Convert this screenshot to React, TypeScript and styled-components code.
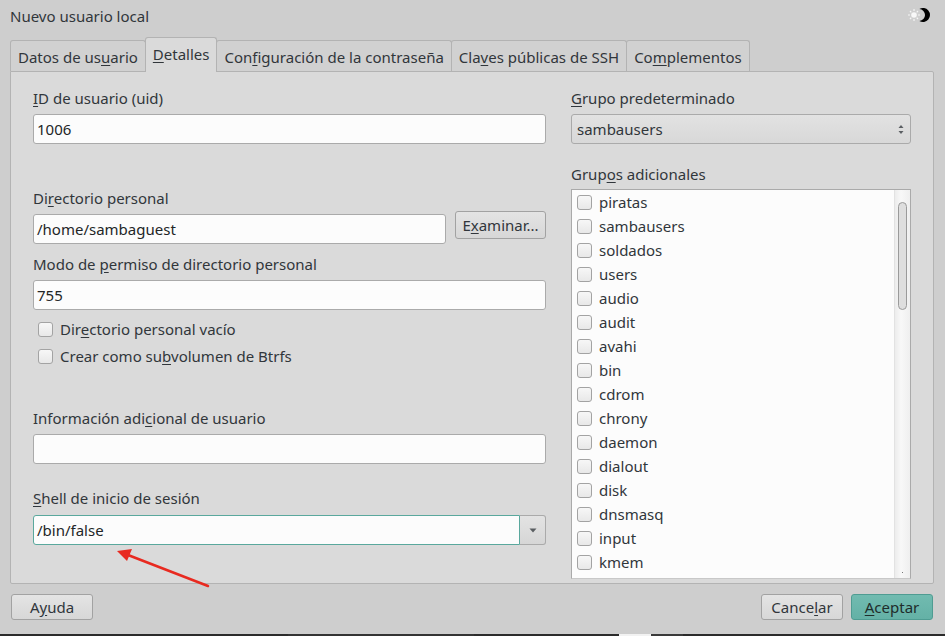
import React from "react";
import styled, { createGlobalStyle } from "styled-components";

const Global = createGlobalStyle`
  html, body { margin: 0; padding: 0; }
  body { background: #cecece; font-family: "Noto Sans", "Open Sans", sans-serif; font-size: 15px; color: #31363b; }
  * { box-sizing: border-box; }
`;

const Window = styled.div`
  position: relative;
  width: 945px;
  height: 636px;
  background: #cecece;
  display: flex;
  flex-direction: column;
  overflow: hidden;
`;

const TitleBar = styled.div`
  height: 37px;
  display: flex;
  align-items: flex-start;
  justify-content: space-between;
  padding: 6px 15px 0 10px;
  color: #31363b;
  line-height: 20px;
`;

const TitleIcon = styled.svg`
  margin-top: 1px;
`;

const TabBar = styled.div`
  display: flex;
  align-items: flex-end;
  height: 34px;
  padding-left: 10px;
`;

const Tab = styled.div<{ $active?: boolean }>`
  position: relative;
  height: ${(p) => (p.$active ? 35 : 31)}px;
  margin-bottom: ${(p) => (p.$active ? -1 : 0)}px;
  margin-right: -1px;
  z-index: ${(p) => (p.$active ? 2 : 1)};
  padding: 0 7px;
  display: flex;
  align-items: center;
  padding-top: ${(p) => (p.$active ? 0 : 1)}px;
  padding-bottom: ${(p) => (p.$active ? 2 : 0)}px;
  border: 1px solid #b3b3b3;
  border-bottom: none;
  border-radius: 3px 3px 0 0;
  background: ${(p) => (p.$active ? "#dadada" : "#d1d1d1")};
  color: #31363b;
  white-space: nowrap;
`;

const Mn = styled.span`
  text-decoration: underline;
  text-underline-offset: 2px;
`;

const Panel = styled.div`
  margin: 0 11px 0 10px;
  height: 513px;
  background: #dadada;
  border: 1px solid #b3b3b3;
  border-radius: 0 2px 2px 2px;
  display: grid;
  grid-template-columns: 513px 340px;
  column-gap: 25px;
  padding: 17px 21px 0 22px;
`;

const Column = styled.div`
  display: flex;
  flex-direction: column;
`;

const Label = styled.div<{ $top?: number }>`
  height: 20px;
  line-height: 18px;
  margin-top: ${(p) => p.$top ?? 0}px;
  color: #31363b;
  white-space: nowrap;
`;

const TextInput = styled.div<{ $top?: number; $grow?: boolean }>`
  height: 30px;
  flex: ${(p) => (p.$grow ? "1 1 auto" : "none")};
  margin-top: ${(p) => p.$top ?? 5}px;
  border: 1px solid #aaaaaa;
  border-radius: 3px;
  background: #fcfcfc;
  padding: 0 3px;
  display: flex;
  align-items: center;
  color: #232627;
`;

const Row = styled.div`
  display: flex;
  align-items: flex-start;
  margin-top: 5px;
`;

const Button = styled.div<{ $primary?: boolean; $w?: number; $h?: number }>`
  width: ${(p) => p.$w ?? 82}px;
  height: ${(p) => p.$h ?? 26}px;
  border: 1px solid ${(p) => (p.$primary ? "#4f9c92" : "#a2a2a2")};
  border-radius: 3px;
  background: ${(p) =>
    p.$primary
      ? "linear-gradient(#71bbb0, #64b1a6)"
      : "linear-gradient(#e4e4e4, #d7d7d7)"};
  display: flex;
  align-items: center;
  justify-content: center;
  color: ${(p) => (p.$primary ? "#1f2d2b" : "#31363b")};
  white-space: nowrap;
`;

const BrowseButton = styled(Button)`
  margin-left: 9px;
  margin-top: -3px;
`;

const CheckRow = styled.div<{ $top?: number }>`
  display: flex;
  align-items: center;
  height: 20px;
  margin-top: ${(p) => p.$top ?? 0}px;
  padding-left: 5px;
  gap: 7px;
  color: #31363b;
`;

const Box = styled.div`
  width: 15px;
  height: 15px;
  border: 1px solid #a3a3a3;
  border-radius: 3px;
  background: linear-gradient(#f7f7f7, #e8e8e8);
  flex: none;
`;

const EditCombo = styled.div`
  display: flex;
  height: 30px;
  margin-top: 6px;
`;

const EditField = styled.div`
  flex: 1;
  border: 1px solid #5aa89d;
  border-radius: 3px 0 0 3px;
  background: #fcfcfc;
  padding: 0 3px;
  display: flex;
  align-items: center;
  color: #232627;
`;

const DropButton = styled.div`
  width: 26px;
  border: 1px solid #aaaaaa;
  border-left: none;
  border-radius: 0 3px 3px 0;
  background: linear-gradient(#e3e3e3, #d6d6d6);
  display: flex;
  align-items: center;
  justify-content: center;
`;

const SelectBox = styled.div`
  height: 30px;
  margin-top: 5px;
  border: 1px solid #aaaaaa;
  border-radius: 3px;
  background: linear-gradient(#e2e2e2, #d8d8d8);
  display: flex;
  align-items: center;
  justify-content: space-between;
  padding: 0 6px 0 5px;
  color: #31363b;
`;

const ListBox = styled.div`
  margin-top: 4px;
  height: 390px;
  border: 1px solid #aaaaaa;
  border-bottom-color: #c8c8c8;
  background: #fcfcfc;
  display: flex;
  overflow: hidden;
`;

const ListItems = styled.div`
  flex: 1;
`;

const ListItem = styled.div`
  height: 24px;
  display: flex;
  align-items: center;
  gap: 7px;
  padding-left: 5px;
  color: #31363b;
`;

const ScrollTrack = styled.div`
  width: 16px;
  background: linear-gradient(90deg, #ececec, #f8f8f8 40%, #efefef);
  border-left: 1px solid #e2e2e2;
  display: flex;
  flex-direction: column;
  align-items: center;
  padding-top: 12px;
  position: relative;
`;

const ScrollThumb = styled.div`
  width: 9px;
  height: 108px;
  border: 1px solid #9a9a9a;
  border-radius: 5px;
  background: #dedede;
`;

const ScrollDot = styled.div`
  position: absolute;
  bottom: 5px;
  left: 7px;
  width: 1px;
  height: 1px;
  background: #777;
`;

const Footer = styled.div`
  display: flex;
  align-items: center;
  justify-content: space-between;
  padding: 9px 12px 0 11px;
  height: 36px;
`;

const FooterRight = styled.div`
  display: flex;
  gap: 8px;
`;

const Spacer = styled.div`
  flex: 1;
`;

const Taskbar = styled.div`
  height: 2px;
  background: #2b2b2b;
  display: flex;
`;

const TaskSeg = styled.div<{ $w: number; $c: string; $ml?: number }>`
  width: ${(p) => p.$w}px;
  margin-left: ${(p) => p.$ml ?? 0}px;
  background: ${(p) => p.$c};
`;

const Annotation = styled.svg`
  position: absolute;
  left: 0;
  top: 0;
  pointer-events: none;
`;

const groups = [
  "piratas",
  "sambausers",
  "soldados",
  "users",
  "audio",
  "audit",
  "avahi",
  "bin",
  "cdrom",
  "chrony",
  "daemon",
  "dialout",
  "disk",
  "dnsmasq",
  "input",
  "kmem",
];

export default function App() {
  return (
    <>
      <Global />
      <Window>
        <TitleBar>
          <span>Nuevo usuario local</span>
          <TitleIcon width="27" height="17" viewBox="0 0 27 17">
            <g stroke="#f6f6f6" strokeWidth="1.2">
              <line x1="11" y1="2" x2="11" y2="4" />
              <line x1="11" y1="12" x2="11" y2="14" />
              <line x1="5" y1="8" x2="7" y2="8" />
              <line x1="15" y1="8" x2="17" y2="8" />
              <line x1="7" y1="4" x2="8.3" y2="5.3" />
              <line x1="13.7" y1="10.7" x2="15" y2="12" />
              <line x1="7" y1="12" x2="8.3" y2="10.7" />
              <line x1="13.7" y1="5.3" x2="15" y2="4" />
            </g>
            <circle cx="11" cy="8" r="2.8" fill="#f8f8f8" />
            <path d="M16.375 2.01 A7 7 0 1 1 16.375 13.99 A6 6 0 0 0 16.375 2.01 Z" fill="#000" />
          </TitleIcon>
        </TitleBar>
        <TabBar>
          <Tab>
            Datos de us<Mn>u</Mn>ario
          </Tab>
          <Tab $active>
            <Mn>D</Mn>etalles
          </Tab>
          <Tab>
            Con<Mn>f</Mn>iguración de la contraseña
          </Tab>
          <Tab>
            Cla<Mn>v</Mn>es públicas de SSH
          </Tab>
          <Tab>
            Co<Mn>m</Mn>plementos
          </Tab>
        </TabBar>
        <Panel>
          <Column>
            <Label>
              <Mn>I</Mn>D de usuario (uid)
            </Label>
            <TextInput>1006</TextInput>
            <Label $top={45}>
              Di<Mn>r</Mn>ectorio personal
            </Label>
            <Row>
              <TextInput $top={0} $grow>
                /home/sambaguest
              </TextInput>
              <BrowseButton $w={91} $h={28}>
                E<Mn>x</Mn>aminar...
              </BrowseButton>
            </Row>
            <Label $top={11}>
              Modo de <Mn>p</Mn>ermiso de directorio personal
            </Label>
            <TextInput>755</TextInput>
            <CheckRow $top={9}>
              <Box />
              <span>
                Dir<Mn>e</Mn>ctorio personal vacío
              </span>
            </CheckRow>
            <CheckRow $top={7}>
              <Box />
              <span>
                Crear como su<Mn>b</Mn>volumen de Btrfs
              </span>
            </CheckRow>
            <Label $top={43}>
              Información adi<Mn>c</Mn>ional de usuario
            </Label>
            <TextInput>{"\u00a0"}</TextInput>
            <Label $top={25}>
              <Mn>S</Mn>hell de inicio de sesión
            </Label>
            <EditCombo>
              <EditField>/bin/false</EditField>
              <DropButton>
                <svg width="8" height="5" viewBox="0 0 8 5">
                  <path d="M0.5 0.5 L7.5 0.5 L4 4.5 Z" fill="#5a5e62" />
                </svg>
              </DropButton>
            </EditCombo>
          </Column>
          <Column>
            <Label>
              <Mn>G</Mn>rupo predeterminado
            </Label>
            <SelectBox>
              <span>sambausers</span>
              <svg width="6" height="11" viewBox="0 0 6 11">
                <path d="M0.5 4 L5.5 4 L3 1 Z" fill="#5a5e62" />
                <path d="M0.5 7 L5.5 7 L3 10 Z" fill="#5a5e62" />
              </svg>
            </SelectBox>
            <Label $top={21}>
              Grup<Mn>o</Mn>s adicionales
            </Label>
            <ListBox>
              <ListItems>
                {groups.map((g) => (
                  <ListItem key={g}>
                    <Box />
                    <span>{g}</span>
                  </ListItem>
                ))}
              </ListItems>
              <ScrollTrack>
                <ScrollThumb />
                <ScrollDot />
              </ScrollTrack>
            </ListBox>
          </Column>
        </Panel>
        <Footer>
          <Button>
            A<Mn>y</Mn>uda
          </Button>
          <FooterRight>
            <Button>
              Cance<Mn>l</Mn>ar
            </Button>
            <Button $primary>
              <Mn>A</Mn>ceptar
            </Button>
          </FooterRight>
        </Footer>
        <Spacer />
        <Taskbar>
          <TaskSeg $w={186} $c="#333333" $ml={288} />
          <TaskSeg $w={32} $c="#f2f2f2" $ml={145} />
          <TaskSeg $w={32} $c="#3a3a3a" />
        </Taskbar>
        <Annotation width="945" height="636" viewBox="0 0 945 636">
          <line x1="208" y1="586" x2="128" y2="555" stroke="#e82a20" strokeWidth="2.5" strokeLinecap="round" />
          <path d="M117 551 L132 549 L127 561 Z" fill="#e82a20" />
        </Annotation>
      </Window>
    </>
  );
}
